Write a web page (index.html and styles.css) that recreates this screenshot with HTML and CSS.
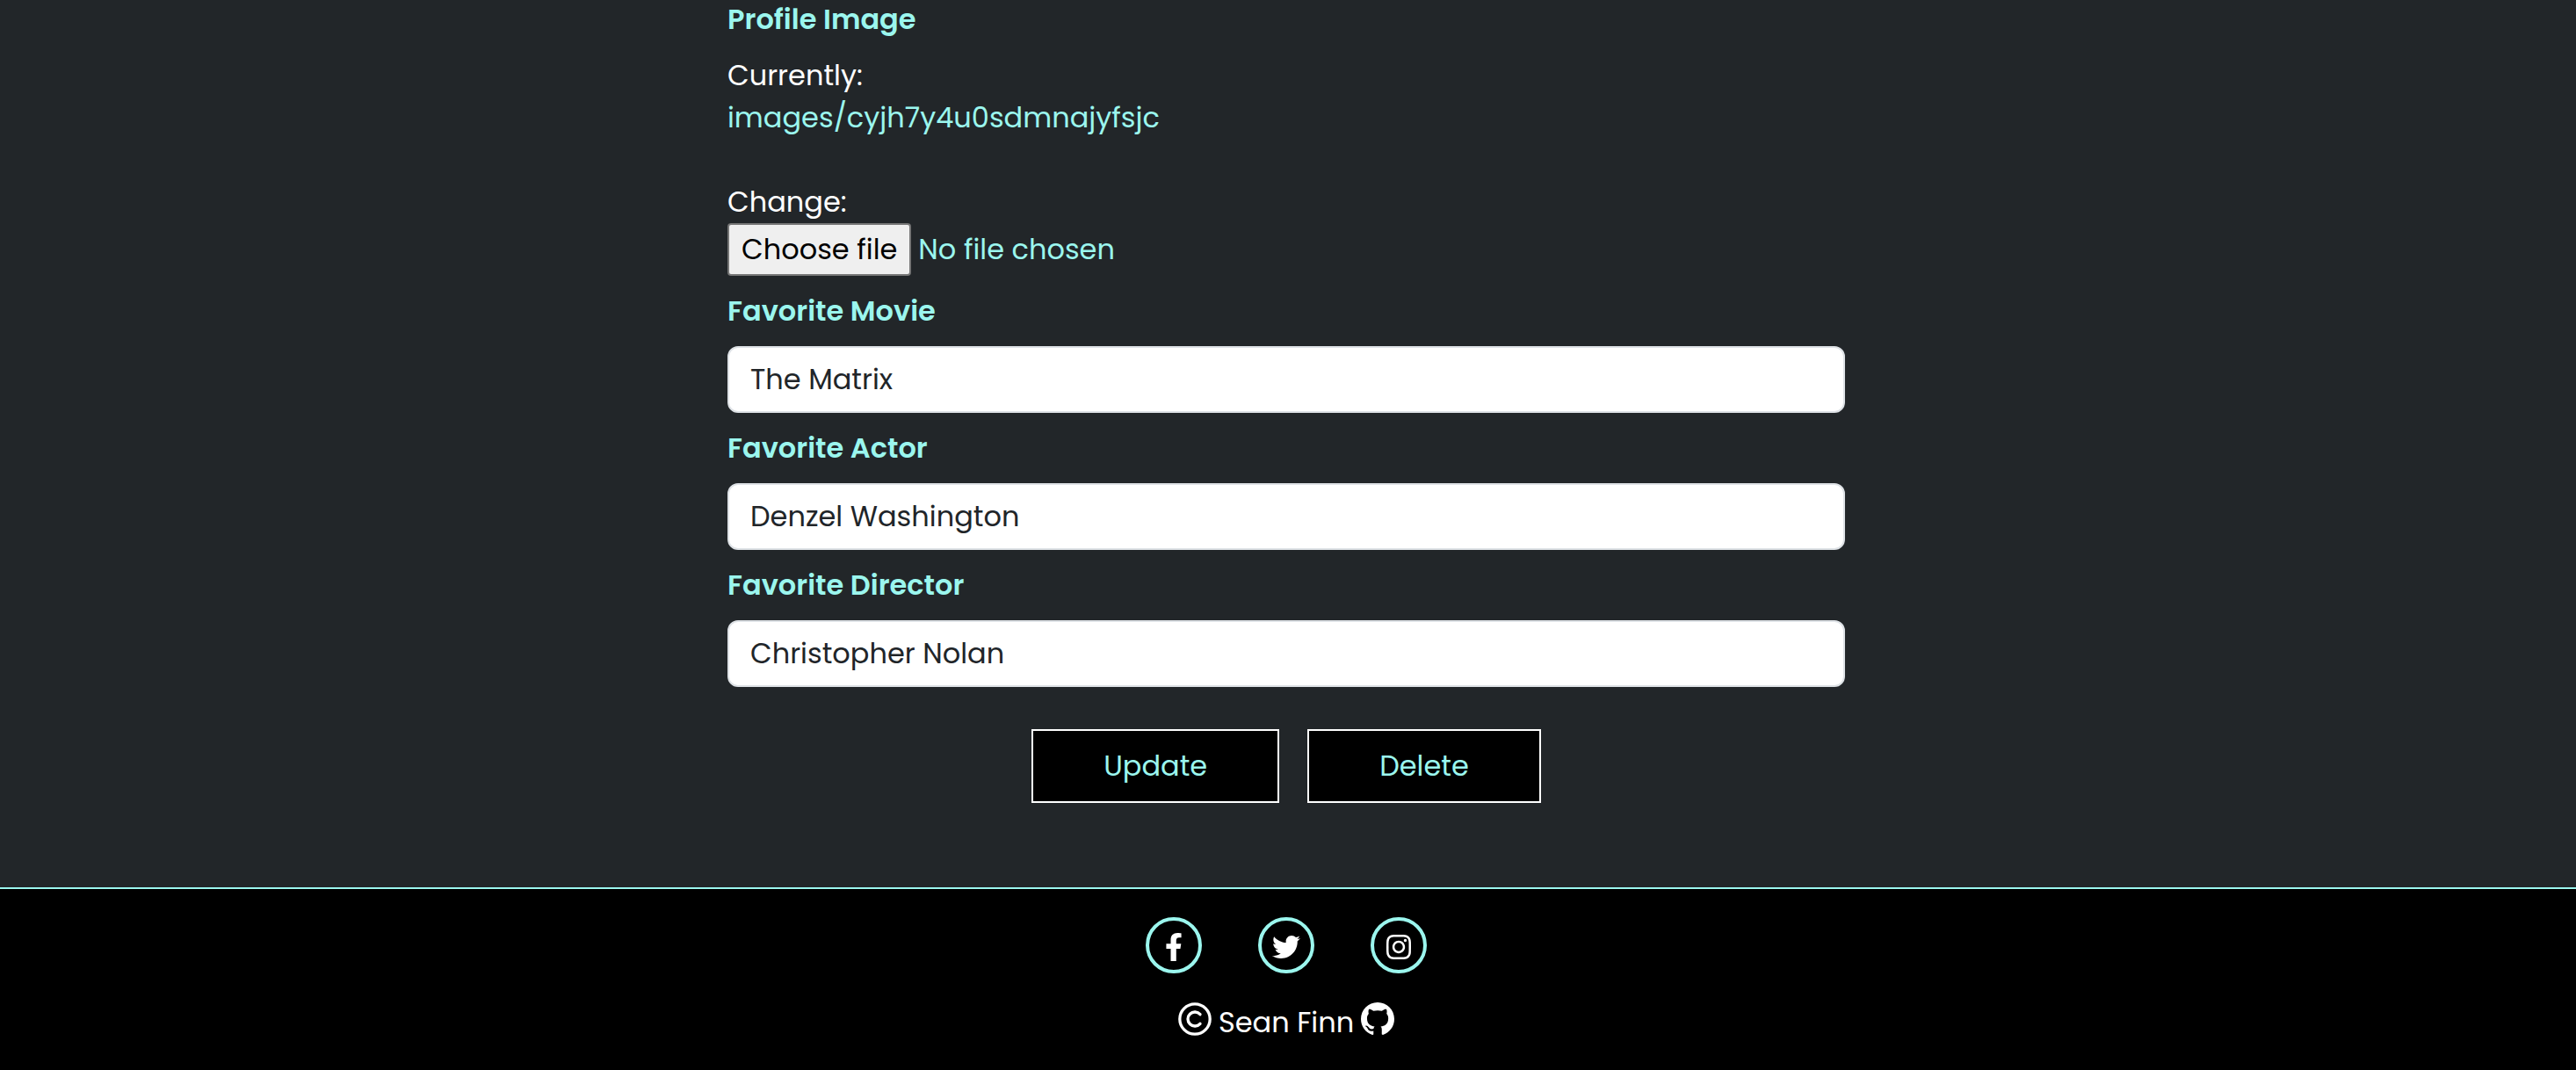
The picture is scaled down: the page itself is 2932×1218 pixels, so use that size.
FILE: index.html
```html
<!DOCTYPE html>
<html lang="en">
<head>
<meta charset="utf-8">
<meta name="viewport" content="width=device-width, initial-scale=1">
<title>Edit Profile</title>
<link rel="stylesheet" href="styles.css">
</head>
<body>
<main class="content">
  <form class="profile-form">
    <div class="field">
      <label class="field-label" for="profile-image">Profile Image</label>
      <div class="image-field">
        <span>Currently:</span>
        <a class="image-link" href="#">images/cyjh7y4u0sdmnajyfsjc</a>
        <span class="change">Change:</span>
        <div class="file-picker">
          <span class="file-button">Choose file</span>
          <span class="file-status">No file chosen</span>
          <input class="file-input" type="file" id="profile-image">
        </div>
      </div>
    </div>
    <div class="field">
      <label class="field-label" for="movie">Favorite Movie</label>
      <input class="text-input" type="text" id="movie" value="The Matrix">
    </div>
    <div class="field">
      <label class="field-label" for="actor">Favorite Actor</label>
      <input class="text-input" type="text" id="actor" value="Denzel Washington">
    </div>
    <div class="field">
      <label class="field-label" for="director">Favorite Director</label>
      <input class="text-input" type="text" id="director" value="Christopher Nolan">
    </div>
    <div class="actions">
      <button class="btn" type="submit">Update</button>
      <button class="btn" type="button">Delete</button>
    </div>
  </form>
</main>
<footer class="footer">
  <nav class="social" aria-label="Social media">
    <a class="social-link" href="#" aria-label="Facebook">
      <svg width="32" height="32" viewBox="0 0 320 512" fill="currentColor"><path d="M279.14 288l14.22-92.66h-88.91v-60.13c0-25.35 12.42-50.06 52.24-50.06h40.42V6.26S260.43 0 225.36 0c-73.22 0-121.08 44.38-121.08 124.72v70.62H22.89V288h81.39v224h100.17V288z"/></svg>
    </a>
    <a class="social-link" href="#" aria-label="Twitter">
      <svg width="32" height="32" viewBox="0 0 512 512" fill="currentColor"><path d="M459.37 151.716c.325 4.548.325 9.097.325 13.645 0 138.72-105.583 298.558-298.558 298.558-59.452 0-114.68-17.219-161.137-47.106 8.447.974 16.568 1.299 25.34 1.299 49.055 0 94.213-16.568 130.274-44.832-46.132-.975-84.792-31.188-98.112-72.772 6.498.974 12.995 1.624 19.818 1.624 9.421 0 18.843-1.3 27.614-3.573-48.081-9.747-84.143-51.98-84.143-102.985v-1.299c13.969 7.797 30.214 12.67 47.431 13.319-28.264-18.843-46.781-51.005-46.781-87.391 0-19.492 5.197-37.36 14.294-52.954 51.655 63.675 129.3 105.258 216.365 109.807-1.624-7.797-2.599-15.918-2.599-24.04 0-57.828 46.782-104.934 104.934-104.934 30.213 0 57.502 12.67 76.67 33.137 23.715-4.548 46.456-13.32 66.599-25.34-7.798 24.366-24.366 44.833-46.132 57.827 21.117-2.273 41.584-8.122 60.426-16.243-14.292 20.791-32.161 39.308-52.628 54.253z"/></svg>
    </a>
    <a class="social-link" href="#" aria-label="Instagram">
      <svg width="32" height="32" viewBox="0 0 448 512" fill="currentColor"><path d="M224.1 141c-63.6 0-114.9 51.3-114.9 114.9s51.3 114.9 114.9 114.9S339 319.5 339 255.9 287.7 141 224.1 141zm0 189.6c-41.1 0-74.7-33.5-74.7-74.7s33.5-74.7 74.7-74.7 74.7 33.5 74.7 74.7-33.6 74.7-74.7 74.7zm146.4-194.3c0 14.9-12 26.8-26.8 26.8-14.9 0-26.8-12-26.8-26.8s12-26.8 26.8-26.8 26.8 12 26.8 26.8zm76.1 27.2c-1.7-35.9-9.9-67.7-36.2-93.9-26.2-26.2-58-34.4-93.9-36.2-37-2.1-147.9-2.1-184.9 0-35.8 1.7-67.6 9.9-93.9 36.1s-34.4 58-36.2 93.9c-2.1 37-2.1 147.9 0 184.9 1.7 35.9 9.9 67.7 36.2 93.9s58 34.4 93.9 36.2c37 2.1 147.9 2.1 184.9 0 35.9-1.7 67.7-9.9 93.9-36.2 26.2-26.2 34.4-58 36.2-93.9 2.1-37 2.1-147.8 0-184.8zM398.8 388c-7.8 19.6-22.9 34.7-42.6 42.6-29.5 11.7-99.5 9-132.1 9s-102.7 2.6-132.1-9c-19.6-7.8-34.7-22.9-42.6-42.6-11.7-29.5-9-99.5-9-132.1s-2.6-102.7 9-132.1c7.8-19.6 22.9-34.7 42.6-42.6 29.5-11.7 99.5-9 132.1-9s102.7-2.6 132.1 9c19.6 7.8 34.7 22.9 42.6 42.6 11.7 29.5 9 99.5 9 132.1s2.7 102.7-9 132.1z"/></svg>
    </a>
  </nav>
  <div class="credit">
    <svg class="credit-icon" width="38" height="38" viewBox="0 0 38 38" fill="none" stroke="currentColor" stroke-width="3.3" role="img" aria-label="Copyright"><circle cx="19" cy="19" r="17.2"/><path d="M25 13.7A8 8 0 1 0 25 24.300" stroke-linecap="round"/></svg>
    <span>Sean Finn</span>
    <a class="credit-icon" href="#" aria-label="GitHub">
      <svg width="38" height="38" viewBox="0 0 16 16" fill="currentColor"><path d="M8 0C3.580 0 0 3.580 0 8c0 3.540 2.290 6.530 5.470 7.590.4.070.55-.17.55-.38 0-.19-.01-.82-.01-1.490-2.010.37-2.530-.49-2.690-.94-.09-.23-.48-.94-.82-1.130-.28-.15-.68-.52-.01-.53.63-.01 1.080.58 1.230.82.72 1.210 1.870.87 2.330.66.07-.52.28-.87.51-1.070-1.780-.2-3.640-.89-3.640-3.950 0-.87.31-1.590.82-2.150-.08-.2-.36-1.020.08-2.120 0 0 .67-.21 2.200.82.64-.18 1.320-.27 2-.27s1.360.09 2 .27c1.530-1.040 2.200-.82 2.200-.82.44 1.100.16 1.920.08 2.120.51.56.82 1.270.82 2.150 0 3.070-1.870 3.750-3.650 3.950.29.25.54.73.54 1.480 0 1.070-.01 1.930-.01 2.200 0 .21.15.46.55.38A8.010 8.010 0 0 0 16 8c0-4.420-3.580-8-8-8z"/></svg>
    </a>
  </div>
</footer>
</body>
</html>
```

FILE: styles.css
```css
:root {
  --accent: #9bf6ee;
  --surface: #222629;
}

* {
  box-sizing: border-box;
}

body {
  margin: 0;
  background: #000;
  color: #fff;
  font: 400 32px/48px Poppins, Inter, "Liberation Sans", sans-serif;
}

a {
  color: var(--accent);
  text-decoration: none;
}

.content {
  display: flow-root;
  padding: 0 4px 96px 0;
  background: var(--surface);
}

.profile-form {
  display: flex;
  flex-direction: column;
  gap: 16px;
  width: 90%;
  max-width: 1272px;
  margin: -2px auto 0;
}

.field {
  display: flex;
  flex-direction: column;
  gap: 16px;
}

.field-label {
  color: var(--accent);
  font-weight: 600;
}

.image-field {
  display: flex;
  flex-direction: column;
  align-items: flex-start;
}

.change {
  margin-top: 48px;
}

.file-picker {
  position: relative;
  display: flex;
  align-items: center;
  gap: 8px;
  color: var(--accent);
}

.file-button {
  padding: 4px 14px;
  border: 2px solid #767676;
  border-radius: 4px;
  background: #efefef;
  color: #000;
}

.file-input {
  position: absolute;
  inset: 0;
  width: 100%;
  opacity: 0;
}

.text-input {
  width: 100%;
  height: 76px;
  padding: 12px 24px;
  border: 2px solid #dee2e6;
  border-radius: 12px;
  background: #fff;
  color: #212529;
  font: inherit;
}

.actions {
  display: flex;
  justify-content: center;
  gap: 32px;
  margin-top: 32px;
}

.btn {
  padding: 16px 80px;
  border: 2px solid #fff;
  background: #000;
  color: var(--accent);
  font: inherit;
}

.footer {
  display: flex;
  flex-direction: column;
  align-items: center;
  gap: 32px;
  padding: 32px 4px 30px 0;
  border-top: 2px solid var(--accent);
}

.social {
  display: flex;
  gap: 64px;
}

.social-link {
  display: flex;
  align-items: center;
  justify-content: center;
  width: 64px;
  height: 64px;
  padding-top: 4px;
  border: 4px solid var(--accent);
  border-radius: 50%;
  color: #fff;
}

.credit {
  display: flex;
  align-items: center;
  gap: 8px;
}

.credit-icon {
  display: flex;
  margin-bottom: 8px;
  color: #fff;
}
```
